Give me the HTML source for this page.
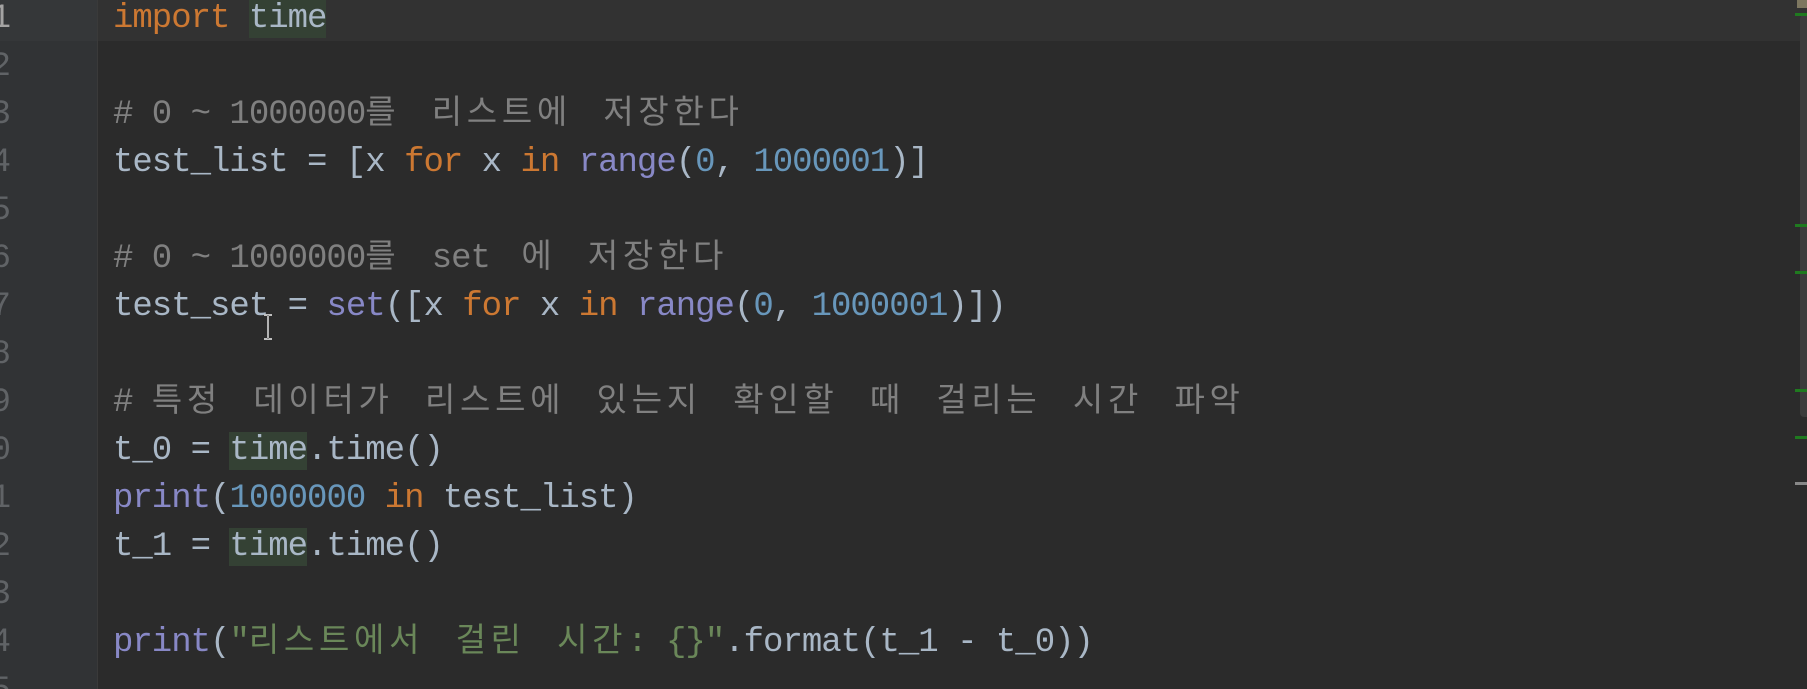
<!DOCTYPE html>
<html><head><meta charset="utf-8"><style>
html,body{margin:0;padding:0;width:1807px;height:689px;overflow:hidden;background:#2b2b2b}
body{position:relative;font-family:"Liberation Mono","Noto Sans CJK KR",monospace;font-size:34px;letter-spacing:-1px;color:#a9b7c6}
.gut{position:absolute;left:0;top:0;width:97px;height:689px;background:#313335;border-right:1px solid #3a3a3a}
.hl{position:absolute;left:98px;top:0;width:1709px;height:41px;background:#323232}
.ghl{position:absolute;left:0;top:0;width:97px;height:41px;background:#353739}
.ln{position:absolute;right:1797px;color:#606366;line-height:48px;white-space:pre}
.l{position:absolute;left:113px;line-height:48px;height:48px;white-space:pre}
.k{color:#cc7832}.n{color:#6897bb}.b{color:#8888c6}.c{color:#808080}.s{color:#6a8759}
.t{background:#344134}
.ko{letter-spacing:4.7px;font-family:"Noto Sans CJK KR",sans-serif;font-size:33px;line-height:1px}
.sp{letter-spacing:11px}
.mk{position:absolute;left:1795px;width:12px;height:3px;background:#1f7a1f}
</style></head><body>
<div class="gut"></div><div class="ghl"></div><div class="hl"></div>
<div class="ln" style="top:-5px;color:#a4a3a3">1</div>
<div class="ln" style="top:43px">2</div>
<div class="ln" style="top:91px">3</div>
<div class="ln" style="top:139px">4</div>
<div class="ln" style="top:187px">5</div>
<div class="ln" style="top:235px">6</div>
<div class="ln" style="top:283px">7</div>
<div class="ln" style="top:331px">8</div>
<div class="ln" style="top:379px">9</div>
<div class="ln" style="top:427px">10</div>
<div class="ln" style="top:475px">11</div>
<div class="ln" style="top:523px">12</div>
<div class="ln" style="top:571px">13</div>
<div class="ln" style="top:619px">14</div>
<div class="ln" style="top:667px">15</div>

<div class="l" style="top:-5px"><span class="k">import</span> <span class="t">time</span></div>
<div class="l c" style="top:91px"># 0 ~ 1000000<span class="ko">를</span><span class="sp"> </span><span class="ko">리스트에</span><span class="sp"> </span><span class="ko">저장한다</span></div>
<div class="l" style="top:139px">test_list = [x <span class="k">for</span> x <span class="k">in</span> <span class="b">range</span>(<span class="n">0</span>, <span class="n">1000001</span>)]</div>
<div class="l c" style="top:235px"># 0 ~ 1000000<span class="ko">를</span><span class="sp"> </span>set<span class="sp"> </span><span class="ko">에</span><span class="sp"> </span><span class="ko">저장한다</span></div>
<div class="l" style="top:283px">test_set = <span class="b">set</span>([x <span class="k">for</span> x <span class="k">in</span> <span class="b">range</span>(<span class="n">0</span>, <span class="n">1000001</span>)])</div>
<div class="l c" style="top:379px"># <span class="ko">특정</span><span class="sp"> </span><span class="ko">데이터가</span><span class="sp"> </span><span class="ko">리스트에</span><span class="sp"> </span><span class="ko">있는지</span><span class="sp"> </span><span class="ko">확인할</span><span class="sp"> </span><span class="ko">때</span><span class="sp"> </span><span class="ko">걸리는</span><span class="sp"> </span><span class="ko">시간</span><span class="sp"> </span><span class="ko">파악</span></div>
<div class="l" style="top:427px">t_0 = <span class="t">time</span>.time()</div>
<div class="l" style="top:475px"><span class="b">print</span>(<span class="n">1000000</span> <span class="k">in</span> test_list)</div>
<div class="l" style="top:523px">t_1 = <span class="t">time</span>.time()</div>
<div class="l" style="top:619px"><span class="b">print</span>(<span class="s">"<span class="ko">리스트에서</span><span class="sp"> </span><span class="ko">걸린</span><span class="sp"> </span><span class="ko">시간</span>: {}"</span>.format(t_1 - t_0))</div>

<svg style="position:absolute;left:262px;top:313px" width="12" height="28"><path d="M2 2h8M6 2v24M2 26h8" stroke="#fff" stroke-width="2" fill="none"/><path d="M2 2h8M6 2v24M2 26h8" stroke="#000" stroke-width="0.6" fill="none"/></svg>

<div style="position:absolute;left:1800px;top:15px;width:7px;height:402px;background:#3c3c3c;border-radius:4px 0 0 4px"></div>
<div style="position:absolute;left:1797px;top:0;width:10px;height:8px;background:#7d7760"></div>
<div class="mk" style="top:13px"></div>
<div class="mk" style="top:224px"></div>
<div class="mk" style="top:271px"></div>
<div class="mk" style="top:389px"></div>
<div class="mk" style="top:436px"></div>
<div class="mk" style="top:482px;background:#888"></div>
</body></html>
